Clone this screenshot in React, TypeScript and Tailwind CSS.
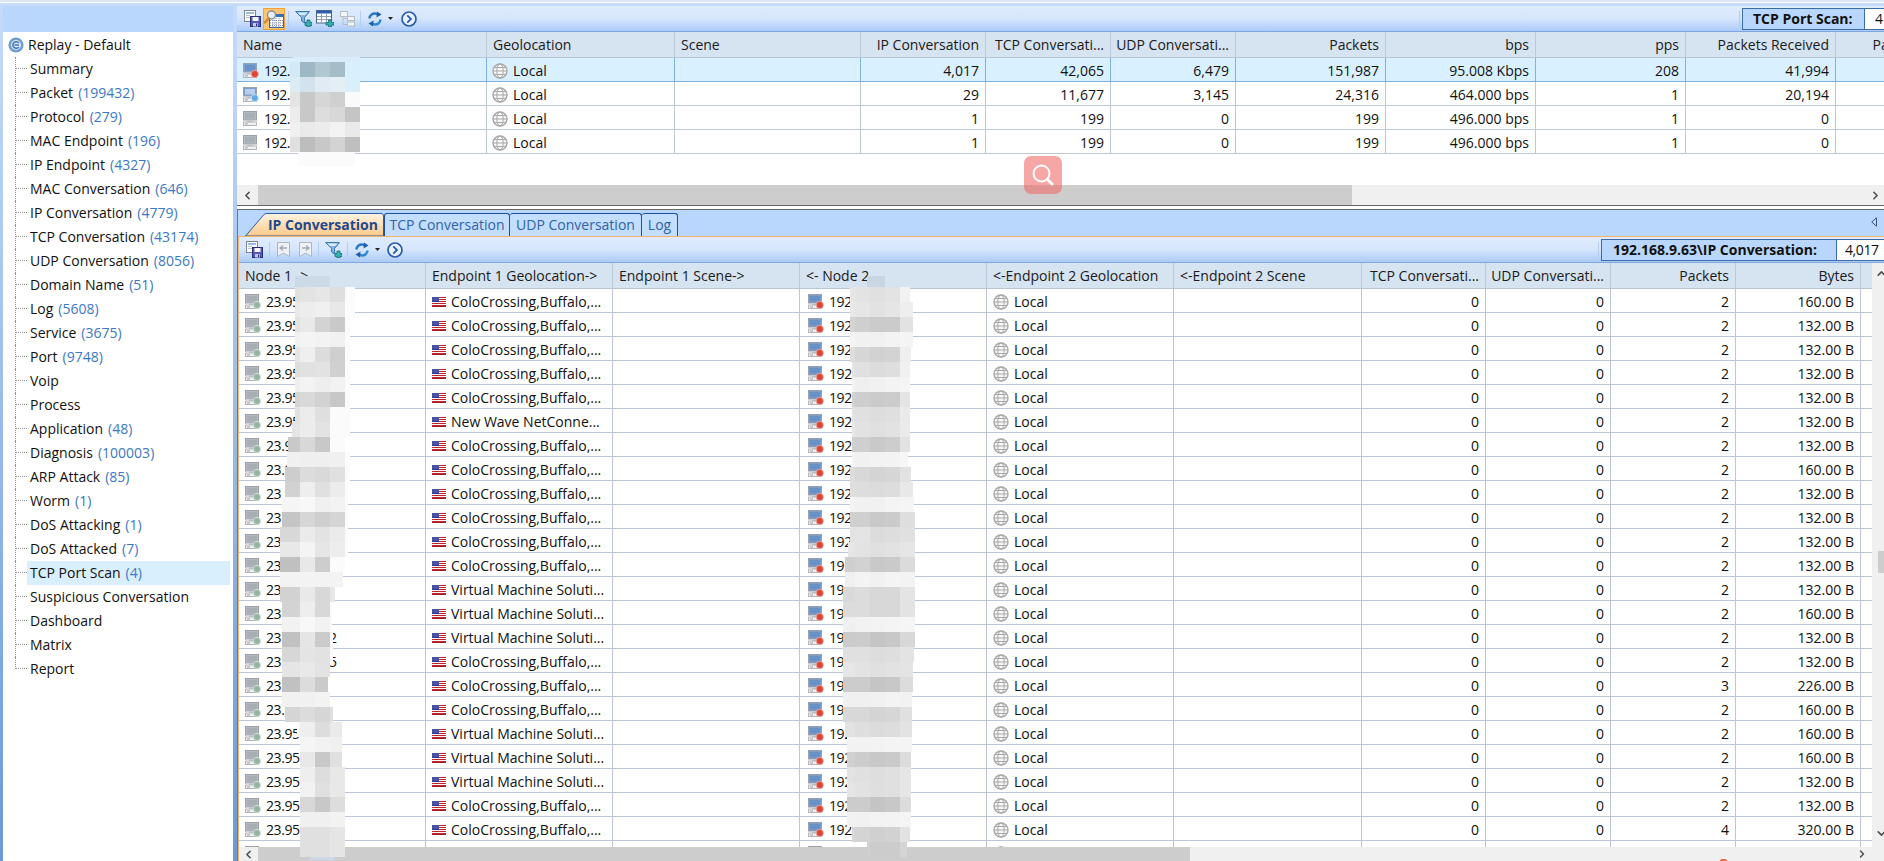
import { ChevronLeft, ChevronRight, ChevronUp, ChevronDown } from "lucide-react";

function SaveIcon() {
  return (
    <svg width="17" height="17" viewBox="0 0 17 17" className="shrink-0">
      <rect x="0.5" y="0.5" width="11" height="11" fill="#fff" stroke="#7d858e" />
      <rect x="2" y="2" width="8" height="2" fill="#9cbbe2" />
      <rect x="2" y="5" width="4" height="1" fill="#b5c4d8" />
      <rect x="2" y="7" width="4" height="1" fill="#b5c4d8" />
      <rect x="6.5" y="6.5" width="10" height="10" fill="#5256b8" stroke="#2a2e78" />
      <rect x="8.5" y="7" width="6" height="4" fill="#f4f6fb" />
      <rect x="9" y="13" width="5" height="3.5" fill="#c6cbe2" />
      <rect x="12" y="13.5" width="1.2" height="2.5" fill="#2a2e78" />
    </svg>
  );
}

function SearchGridIcon() {
  return (
    <svg width="20" height="18" viewBox="0 0 20 18" className="shrink-0">
      <rect x="5.5" y="4.5" width="14" height="13" fill="#fff" stroke="#3a6aa8" />
      <rect x="6" y="5" width="13" height="2" fill="#3a72bc" />
      <path d="M9 8v9M12 8v9M15 8v9M6 10.5h13M6 13h13M6 15.5h13" stroke="#7c8ea6" strokeWidth="1" strokeDasharray="1 1" />
      <circle cx="7.5" cy="5" r="4" fill="#e4f0fb" stroke="#8a8f98" strokeWidth="1.4" />
      <path d="M4.5 8.5L1 12.5" stroke="#c88a2c" strokeWidth="2.4" strokeLinecap="round" />
    </svg>
  );
}

function FilterPlusIcon() {
  return (
    <svg width="17" height="17" viewBox="0 0 17 17" className="shrink-0">
      <path d="M0.5 1.5H14.5L9.6 7.4V13L6.6 11V7.4Z" fill="#7fb4e4" stroke="#3a78b4" />
      <path d="M2.5 2.5H12.5L10 5H5Z" fill="#dcecfa" />
      <path d="M10 12.5h2V10h3v2.5H17v3h-2V17h-3v-1.5H10Z" fill="#34b2ac" stroke="#14687a" strokeWidth="0.8" />
    </svg>
  );
}

function TablePlusIcon() {
  return (
    <svg width="18" height="17" viewBox="0 0 18 17" className="shrink-0">
      <rect x="0.5" y="0.5" width="15" height="12.5" fill="#fff" stroke="#4a6488" />
      <rect x="1" y="1" width="14" height="2.5" fill="#2a5cb0" />
      <path d="M1 6.5h14M1 9.5h14M5.5 3.5v9M10.5 3.5v9" stroke="#8ea0b6" strokeWidth="1" />
      <path d="M10 12.5h2.5V10h3v2.5H18v2.5h-2.5V17h-3v-2H10Z" fill="#34b2ac" stroke="#14687a" strokeWidth="0.8" />
    </svg>
  );
}

function TreeIcon() {
  return (
    <svg width="15" height="16" viewBox="0 0 15 16" className="shrink-0">
      <g fill="#f2f5f8" stroke="#b6bcc4">
        <rect x="0.5" y="0.5" width="7" height="5" />
        <rect x="7.5" y="5.5" width="7" height="4" />
        <rect x="7.5" y="11" width="7" height="4" />
      </g>
      <path d="M3 6v7.5h4M3 7.5h4" fill="none" stroke="#b6bcc4" />
    </svg>
  );
}

function RefreshIcon() {
  return (
    <svg width="14" height="16" viewBox="0 0 14 16" className="shrink-0">
      <path d="M1.5 7.5C1.8 4 4.6 2 8 2.6L10.5 3.6" fill="none" stroke="#2b78c8" strokeWidth="2.4" />
      <path d="M9 0.5L13.5 3.6L8.5 6.5Z" fill="#1c5fa8" />
      <path d="M12.5 8.5C12.2 12 9.4 14 6 13.4L3.5 12.4" fill="none" stroke="#2b88d0" strokeWidth="2.4" />
      <path d="M5 15.5L0.5 12.4L5.5 9.5Z" fill="#1c5fa8" />
    </svg>
  );
}

function CircleNextIcon() {
  return (
    <svg width="16" height="16" viewBox="0 0 16 16" className="shrink-0">
      <circle cx="8" cy="8" r="7" fill="#e8f1fd" stroke="#2a5ca8" strokeWidth="1.7" />
      <path d="M6.3 4.3L10 8L6.3 11.7" fill="none" stroke="#2a5ca8" strokeWidth="1.8" />
    </svg>
  );
}

function BookmarkIcon({ dir }: { dir: "left" | "right" }) {
  return (
    <svg width="13" height="15" viewBox="0 0 13 15" className="shrink-0">
      <path d="M0.5 0.5H12.5V14.5L6.5 11L0.5 14.5Z" fill="#eef1f5" stroke="#aeb5bd" />
      <path d={dir === "left" ? "M3 6H10M6 3.5L3 6L6 8.5" : "M3 6H10M7 3.5L10 6L7 8.5"} fill="none" stroke="#a3a9b2" strokeWidth="1.3" />
    </svg>
  );
}

function DropArrow() {
  return (
    <svg width="5" height="3" viewBox="0 0 5 3" className="shrink-0">
      <path d="M0 0H5L2.5 3Z" fill="#222" />
    </svg>
  );
}

function ToolSep() {
  return <div className="w-[1px] h-[15px] bg-[#f4f8ff] border-l border-[#b5cdec] shrink-0" />;
}

function HostIcon({ badge }: { badge: "red" | "blue" | "none" | "green" }) {
  const server = badge === "none" || badge === "green";
  return (
    <svg width="16" height="15" viewBox="0 0 16 15" className="shrink-0">
      <rect x="0.5" y="0.5" width="13" height="8.5" fill={server ? "#b4bbc0" : "#7b9dcc"} stroke={server ? "#9ca4aa" : "#98a2ac"} />
      <rect x="2" y="2" width="10" height="5.5" fill={server ? "#a7afb5" : badge === "blue" ? "#b7cfec" : "#6a90c8"} />
      <rect x="4" y="9.5" width="6" height="1.5" fill="#c0c5c9" />
      <rect x="0.5" y="11" width="13" height="3.5" fill="#f0f1f2" stroke="#b2b6ba" />
      <rect x="2" y="12.4" width="3" height="1" fill="#9aa0a6" />
      {badge === "red" && <circle cx="11.8" cy="11" r="3.6" fill="#dc4436" stroke="#f3b0a6" strokeWidth="0.8" />}
      {badge === "blue" && <circle cx="11.8" cy="11" r="3.6" fill="#63ade4" stroke="#d4e8f8" strokeWidth="0.8" />}
      {badge === "green" && <circle cx="12" cy="11" r="3.6" fill="#94b6a0" stroke="#dbe3dc" strokeWidth="0.8" />}
    </svg>
  );
}

function GlobeIcon() {
  return (
    <svg width="16" height="16" viewBox="0 0 16 16" fill="none" stroke="#a8a8a8" strokeWidth="1" className="shrink-0">
      <circle cx="8" cy="8" r="7" fill="#f7f7f7" strokeWidth="1.4" />
      <ellipse cx="8" cy="8" rx="3.2" ry="7" />
      <path d="M1 8H15M2 4.5H14M2 11.5H14" />
    </svg>
  );
}

function UsFlag() {
  return (
    <svg width="14" height="10" viewBox="0 0 14 10" className="shrink-0">
      <rect width="14" height="10" fill="#fff" />
      <path d="M0 0.5H14M0 2.5H14M0 4.5H14M0 6.5H14M0 8.5H14" stroke="#c8202c" strokeWidth="1" />
      <path d="M0 9.5H14" stroke="#a02028" strokeWidth="1" />
      <rect width="7" height="5" fill="#2b3a90" />
      <path d="M0.5 1H7M0.5 3H7" stroke="#b8c0e8" strokeWidth="0.8" strokeDasharray="1 1" />
    </svg>
  );
}

function ReplayIcon() {
  return (
    <svg width="16" height="16" viewBox="0 0 16 16" className="shrink-0">
      <circle cx="8" cy="8" r="7.6" fill="#6e9fd0" />
      <circle cx="8" cy="8" r="5" fill="#dbe8f5" />
      <path d="M10.8 6.2A3.2 3.2 0 1 0 10.8 9.8" fill="none" stroke="#3f78b4" strokeWidth="1.5" />
      <path d="M6.5 8H11" stroke="#3f78b4" strokeWidth="1.5" />
    </svg>
  );
}

const treeItems: [string, string?][] = [
  ["Summary"],
  ["Packet", "(199432)"],
  ["Protocol", "(279)"],
  ["MAC Endpoint", "(196)"],
  ["IP Endpoint", "(4327)"],
  ["MAC Conversation", "(646)"],
  ["IP Conversation", "(4779)"],
  ["TCP Conversation", "(43174)"],
  ["UDP Conversation", "(8056)"],
  ["Domain Name", "(51)"],
  ["Log", "(5608)"],
  ["Service", "(3675)"],
  ["Port", "(9748)"],
  ["Voip"],
  ["Process"],
  ["Application", "(48)"],
  ["Diagnosis", "(100003)"],
  ["ARP Attack", "(85)"],
  ["Worm", "(1)"],
  ["DoS Attacking", "(1)"],
  ["DoS Attacked", "(7)"],
  ["TCP Port Scan", "(4)"],
  ["Suspicious Conversation"],
  ["Dashboard"],
  ["Matrix"],
  ["Report"],
];

function Sidebar() {
  return (
    <aside className="w-[230px] shrink-0 flex flex-col bg-white">
      <div className="h-[26px] bg-[#b9d7fd]" />
      <div className="h-[25px] flex items-center pl-[5px] gap-[4px] text-[#111]">
        <ReplayIcon />
        <span>Replay - Default</span>
      </div>
      {treeItems.map(([label, count], i) => (
        <div key={label} className="h-[24px] flex pl-[12px]">
          <div className={`w-0 border-l border-dotted border-[#8f8f8f] ${i === treeItems.length - 1 ? "h-[12px]" : "h-[24px]"}`} />
          <div className="w-[11px] h-[12px] border-b border-dotted border-[#8f8f8f] shrink-0" />
          <div className={`flex-1 flex items-center pl-[3px] mr-[3px] ${label === "TCP Port Scan" ? "bg-[#d9effd]" : ""}`}>
            <span className="text-[#111]">{label}</span>
            {count && <span className="ml-[5px] text-[#3b78c6]">{count}</span>}
          </div>
        </div>
      ))}
    </aside>
  );
}

const topCols = ["w-[250px]", "w-[188px]", "w-[186px]", "w-[125px]", "w-[125px]", "w-[125px]", "w-[150px]", "w-[150px]", "w-[150px]", "w-[150px]", "w-[126px]"];
const topHead = ["Name", "Geolocation", "Scene", "IP Conversation", "TCP Conversati...", "UDP Conversati...", "Packets", "bps", "pps", "Packets Received", "Packets Sent"];
const topRows: { ip: string; badge: "red" | "blue" | "none"; vals: string[] }[] = [
  { ip: "192.1", badge: "red", vals: ["4,017", "42,065", "6,479", "151,987", "95.008 Kbps", "208", "41,994", ""] },
  { ip: "192.", badge: "blue", vals: ["29", "11,677", "3,145", "24,316", "464.000 bps", "1", "20,194", ""] },
  { ip: "192.", badge: "none", vals: ["1", "199", "0", "199", "496.000 bps", "1", "0", ""] },
  { ip: "192.", badge: "none", vals: ["1", "199", "0", "199", "496.000 bps", "1", "0", ""] },
];

const lowCols = ["w-[187px]", "w-[187px]", "w-[187px]", "w-[187px]", "w-[187px]", "w-[188px]", "w-[124px]", "w-[125px]", "w-[125px]", "w-[125px]"];
const lowHead = ["Node 1 ->", "Endpoint 1 Geolocation->", "Endpoint 1 Scene->", "<- Node 2", "<-Endpoint 2 Geolocation", "<-Endpoint 2 Scene", "TCP Conversati...", "UDP Conversati...", "Packets", "Bytes"];

const colo = "ColoCrossing,Buffalo,...";
const vm = "Virtual Machine Soluti...";
const lowRows: [string, string, string][] = [
  [colo, "2", "160.00 B"],
  [colo, "2", "132.00 B"],
  [colo, "2", "132.00 B"],
  [colo, "2", "132.00 B"],
  [colo, "2", "132.00 B"],
  ["New Wave NetConne...", "2", "132.00 B"],
  [colo, "2", "132.00 B"],
  [colo, "2", "160.00 B"],
  [colo, "2", "132.00 B"],
  [colo, "2", "132.00 B"],
  [colo, "2", "132.00 B"],
  [colo, "2", "132.00 B"],
  [vm, "2", "132.00 B"],
  [vm, "2", "160.00 B"],
  [vm, "2", "132.00 B"],
  [colo, "2", "132.00 B"],
  [colo, "3", "226.00 B"],
  [colo, "2", "160.00 B"],
  [vm, "2", "160.00 B"],
  [vm, "2", "160.00 B"],
  [vm, "2", "132.00 B"],
  [colo, "2", "132.00 B"],
  [colo, "4", "320.00 B"],
];

function HeadRow({ cols, labels, leftCount }: { cols: string[]; labels: string[]; leftCount: number }) {
  return (
    <div className="h-[26px] flex bg-[#d6e3f1] border-b border-[#b9c6d5] text-[#1a1a1a] shrink-0">
      {labels.map((h, i) => (
        <div key={h} className={`${cols[i]} shrink-0 flex items-center px-[6px] pt-[1px] border-r border-[#bcc8d6] whitespace-nowrap overflow-hidden ${i < leftCount ? "justify-start" : "justify-end"}`}>
          {h}
        </div>
      ))}
    </div>
  );
}

function TopTable() {
  return (
    <div className="bg-white overflow-hidden">
      <HeadRow cols={topCols} labels={topHead} leftCount={3} />
      {topRows.map((r, ri) => {
        const sel = ri === 0;
        const cell = `shrink-0 flex items-center pt-[2px] border-r ${sel ? "border-[#7fb2e0]" : "border-[#c0c8d6]"}`;
        return (
          <div key={ri} className={`h-[24px] flex border-b text-[#111] ${sel ? "bg-[#d8f0ff] border-[#7fb2e0]" : "border-[#c0c8d6]"}`}>
            <div className={`${cell} ${topCols[0]} pl-[6px] gap-[5px]`}>
              <HostIcon badge={r.badge} />
              <span className="tracking-[-0.4px]">{r.ip}</span>
            </div>
            <div className={`${cell} ${topCols[1]} pl-[5px] gap-[5px]`}>
              <GlobeIcon />
              <span>Local</span>
            </div>
            <div className={`${cell} ${topCols[2]}`} />
            {r.vals.map((v, i) => (
              <div key={i} className={`${cell} ${topCols[i + 3]} justify-end pr-[6px]`}>{v}</div>
            ))}
          </div>
        );
      })}
    </div>
  );
}

function HScroll({ thumb, arrow }: { thumb: string; arrow: string }) {
  return (
    <div className="flex bg-[#f0f0f0] h-full">
      <div className={`${arrow} shrink-0 flex items-center justify-center text-[#505050]`}>
        <ChevronLeft size={13} strokeWidth={3} />
      </div>
      <div className={`${thumb} shrink-0 bg-[#cdcdcd]`} />
      <div className="flex-1" />
    </div>
  );
}

function LowTable() {
  return (
    <div className="flex-1 flex min-h-0">
      <div className="flex-1 min-w-0 flex flex-col bg-white overflow-hidden">
        <div className="flex shrink-0">
          <HeadRow cols={lowCols} labels={lowHead} leftCount={6} />
          <div className="flex-1 h-[26px] bg-[#d6e3f1] border-b border-[#b9c6d5]" />
        </div>
        <div className="flex-1 min-h-0 overflow-hidden">
          {[...lowRows, null].map((row, i) => (
            <div key={i} className="h-[24px] flex border-b border-[#bcc6d8] text-[#111]">
              <div className={`${lowCols[0]} shrink-0 flex items-center pt-[2px] pl-[6px] gap-[5px] border-r border-[#bcc6d8] whitespace-nowrap overflow-hidden`}>
                <HostIcon badge="green" />
                {row && <span className="tracking-[-0.4px]">{i === 14 ? "23.95.179.2" : i === 15 ? "23.95.179.5" : "23.95.1"}</span>}
              </div>
              <div className={`${lowCols[1]} shrink-0 flex items-center pt-[2px] pl-[6px] gap-[5px] border-r border-[#bcc6d8] whitespace-nowrap`}>
                {row && <UsFlag />}
                {row && <span>{row[0]}</span>}
              </div>
              <div className={`${lowCols[2]} shrink-0 border-r border-[#bcc6d8]`} />
              <div className={`${lowCols[3]} shrink-0 flex items-center pt-[2px] pl-[8px] gap-[5px] border-r border-[#bcc6d8]`}>
                <HostIcon badge="red" />
                {row && <span className="tracking-[-0.4px]">{i === 22 ? "192.16" : "192.1"}</span>}
              </div>
              <div className={`${lowCols[4]} shrink-0 flex items-center pt-[2px] pl-[6px] gap-[5px] border-r border-[#bcc6d8]`}>
                <GlobeIcon />
                {row && <span>Local</span>}
              </div>
              <div className={`${lowCols[5]} shrink-0 border-r border-[#bcc6d8]`} />
              {(row ? ["0", "0", row[1], row[2]] : ["", "", "", ""]).map((v, k) => (
                <div key={k} className={`${lowCols[k + 6]} shrink-0 flex items-center justify-end pt-[2px] pr-[6px] border-r border-[#bcc6d8]`}>{v}</div>
              ))}
            </div>
          ))}
        </div>
      </div>
      <div className="w-[12px] shrink-0 bg-[#f0f0f0] flex flex-col text-[#505050] relative overflow-hidden">
        <div className="h-[20px] pl-[3px] pt-[4px]"><ChevronUp size={13} strokeWidth={3} /></div>
        <div className="ml-[6px] mt-[268px] h-[22px] bg-[#cdcdcd]" />
        <div className="flex-1" />
        <div className="h-[20px] pl-[3px]"><ChevronDown size={13} strokeWidth={3} /></div>
      </div>
    </div>
  );
}

function Toolbar({ children }: { children: React.ReactNode }) {
  return <div className="h-[26px] shrink-0 flex items-center bg-linear-to-b from-[#e0ecfe] via-[#d6e6fd] to-[#abcbf8] border-b border-[#7fa8e0] overflow-hidden">{children}</div>;
}

// blurred redaction patches, one row per line: left right then shades on a 15px grid
const topBlob = [
  "h5 23 90 #daecf9 #daecf9 #daecf9 #daecf9 #daecf9",
  "20 90 #d3e9f6 #9fb8c6 #b1c7d2 #a6bdc9 #d8effe",
  "20 90 #dcecf6 #d3e3ed #e0ebf3 #e4eef5 #d9effc",
  "20 90 e4 c8 d6 d0 fa",
  "20 90 ec c8 dd d8 c5",
  "20 90 f0 ea ec f3 ea",
  "20 90 e0 bd c8 d3 bf",
  "h14 28 85 fb fb fb fb fb",
];

const leftBlob = [
  "h11 25 60 #ccd9e6 #ccd9e6 #ccd9e6 #ccd9e6 #ccd9e6",
  "25 85 e0 e3 e6 de fb",
  "25 85 e8 ed f0 e8 fb",
  "25 80 e2 e9 d3 c9 fb",
  "25 80 f2 f4 f3 f1 fb",
  "25 80 e5 ef dc cf fb",
  "25 80 dd e1 e2 d0 fb",
  "25 80 ee f3 ee f2 fb",
  "25 80 d5 d9 d2 c7 fb",
  "25 80 e2 ec df fb fb",
  "22 80 e5 ec e3 fb fb",
  "18 75 c9 d8 c8 fb fb",
  "17 80 f0 ef ef f0 fb",
  "15 80 cd dc d9 e0 fb",
  "15 78 d2 ee e0 ec fb",
  "12 78 f5 f8 f0 f3 fb",
  "12 78 c5 d6 cf d5 fb",
  "10 78 d8 eb e3 eb fb",
  "10 78 e8 f4 e6 ed fb",
  "10 75 c0 e8 cd fb fb",
  "10 73 f3 f3 f3 f3 fb",
  "10 65 d2 e9 d8 e6 fb",
  "12 62 d3 ee d8 fa fb",
  "12 62 f2 f8 f2 fa fb",
  "12 63 c1 e5 cb fa fb",
  "12 63 d7 e4 e2 fa fb",
  "12 60 e5 e9 e3 fa fb",
  "12 58 c1 dc ca fa fb",
  "12 60 f1 f1 f3 fa fb",
  "15 63 d5 dc d6 e0 fb",
  "27 72 fa ee dd ea fb",
  "30 72 fa f5 f2 f0 fb",
  "30 72 fa e8 c8 e0 fb",
  "30 75 fa ee dd e8 fb",
  "30 75 fa f2 e0 e8 fb",
  "30 75 fa d8 c8 dd fb",
  "30 75 fa f0 f0 f2 fb",
  "30 75 fa e0 e0 e5 fb",
  "30 75 fa e0 e0 e5 fb",
  "h3 40 65 #cdd8e4 #cdd8e4 #cdd8e4 #cdd8e4 #cdd8e4",
];

const rightBlob = [
  "h11 42 60 #c8d6e4 #c8d6e4 #c8d6e4 #c8d6e4 #c8d6e4",
  "25 85 e6 e3 e0 e3 f2",
  "25 88 e8 e6 e2 e5 ee",
  "25 88 d4 cf cb cb e2",
  "25 88 f4 f1 f1 f3 f4",
  "25 86 dd d6 d2 d3 ef",
  "27 85 e4 e0 dc de f0",
  "27 85 f2 ef f1 f3 f4",
  "27 85 d2 ce cb cc e4",
  "27 85 e2 e0 dd df ea",
  "27 85 e8 e2 e0 e2 eb",
  "27 85 d0 cf c9 cd e2",
  "27 83 f4 f1 f3 f3 f6",
  "25 86 dc d8 d4 d6 e2",
  "25 88 df dd dc dd e8",
  "25 89 f3 f1 f1 f4 f5",
  "25 90 d0 cf c9 cb de",
  "25 90 e3 e4 dc dd e0",
  "23 90 e6 e3 e0 e2 e6",
  "20 90 cf d2 c9 ca db",
  "20 90 ef f3 f1 f4 f3",
  "18 90 d9 dc d8 d8 e4",
  "18 90 dc dc d8 d8 e3",
  "18 90 f0 f2 f3 f4 f5",
  "18 90 cb cc c5 c8 d8",
  "18 89 e0 e0 dd de e3",
  "18 88 e6 e3 e0 e2 e4",
  "18 88 cc cc c5 c8 dc",
  "18 87 f0 f0 f1 f3 f2",
  "18 87 d8 d8 d4 d6 e0",
  "20 87 e2 de dc dd e3",
  "22 87 f2 f2 f3 f4 f4",
  "22 86 d0 cc c8 ca dc",
  "22 86 e2 e0 de e0 e6",
  "22 86 e5 e2 df e0 e6",
  "22 86 cc cc c4 c8 dc",
  "22 86 f2 f1 f3 f3 f4",
  "27 85 d8 d4 d0 d2 e2",
  "42 82 d0 d0 cc cc d4",
];

function shade(s: string) {
  return s.length === 2 ? `#${s}${s}${s}` : s;
}

function Blob({ rows, className }: { rows: string[]; className: string }) {
  return (
    <div className={`absolute ${className}`}>
      {rows.map((line, i) => {
        const parts = line.split(" ");
        const h = parts[0].startsWith("h") ? Number(parts.shift()!.slice(1)) : 15;
        const l = Number(parts[0]);
        const r = Number(parts[1]);
        const cells = parts.slice(2);
        return (
          <div key={i} className="overflow-hidden" style={{ marginLeft: l, width: r - l, height: h }}>
            <div className="flex h-full" style={{ marginLeft: -l }}>
              {[cells[0], ...cells, "fb"].map((c, k) => (
                <div key={k} className="w-[15px] h-full shrink-0" style={{ background: shade(c) }} />
              ))}
            </div>
          </div>
        );
      })}
    </div>
  );
}

export default function App() {
  return (
    <div className="relative w-[1884px] h-[861px] overflow-hidden text-[14px] leading-none font-['Open_Sans','Noto_Sans',sans-serif] bg-linear-to-b from-[#c6dcfb] to-[#6a99d9]">
      <div className="h-[2px] bg-[#dbe6f7]" />
      <div className="h-[1px] bg-white" />
      <div className="h-[3px]" />
      <div className="flex h-[855px] pl-[3px]">
        <Sidebar />
        <div className="w-[4px] shrink-0" />
        <main className="flex-1 min-w-0 flex flex-col overflow-hidden">
          <Toolbar>
            <div className="pl-[7px]"><SaveIcon /></div>
            <div className="ml-[2px] w-[22px] h-[22px] flex items-center justify-center bg-[#fcc470] border border-[#f0a33a]">
              <SearchGridIcon />
            </div>
            <div className="ml-[3px]"><ToolSep /></div>
            <div className="ml-[6px]"><FilterPlusIcon /></div>
            <div className="ml-[4px]"><TablePlusIcon /></div>
            <div className="ml-[6px]"><TreeIcon /></div>
            <div className="ml-[5px]"><ToolSep /></div>
            <div className="ml-[7px]"><RefreshIcon /></div>
            <div className="ml-[6px]"><DropArrow /></div>
            <div className="ml-[8px]"><CircleNextIcon /></div>
            <div className="flex-1" />
            <ToolSep />
            <div className="ml-[2px] w-[142px] h-[22px] flex border border-r-0 border-[#3a6ca8] bg-white">
              <div className="w-[122px] flex items-center pl-[10px] bg-[#b9d6fc] border-r border-[#3a6ca8] font-bold text-[#111]">TCP Port Scan:</div>
              <div className="flex-1 flex items-center pl-[10px] text-[#111]">4</div>
            </div>
          </Toolbar>
          <TopTable />
          <div className="h-[31px] bg-white shrink-0" />
          <div className="h-[20px] shrink-0">
            <HScroll thumb="w-[1094px]" arrow="w-[21px]" />
          </div>
          <div className="h-[5px] shrink-0 bg-white border-t border-b border-[#666]" />
          <div className="flex-1 min-h-0 flex flex-col border-l border-[#4f7fc0]">
            <div className="h-[26px] shrink-0 flex items-end pl-[7px] bg-[#b9d7fc] relative">
              <div className="relative w-[139px] h-[23px] flex items-center justify-end pr-[6px] font-bold text-[#1d4a8e]">
                <svg width="139" height="23" viewBox="0 0 139 23" className="absolute inset-0">
                  <defs>
                    <linearGradient id="activeTab" x1="0" y1="0" x2="0" y2="1">
                      <stop offset="0" stopColor="#fff4e2" />
                      <stop offset="1" stopColor="#fbc888" />
                    </linearGradient>
                  </defs>
                  <path d="M0.5 23L19 1.5Q20 0.5 22 0.5H136Q138.5 0.5 138.5 3V23Z" fill="url(#activeTab)" stroke="#2a5ca8" />
                </svg>
                <span className="relative">IP Conversation</span>
              </div>
              <div className="w-[126px] h-[23px] flex items-center justify-center rounded-t-[3px] border border-b-0 border-[#1f50a0] text-[#2f63a8] bg-[#c4defd]">TCP Conversation</div>
              <div className="w-[132px] h-[23px] flex items-center justify-center rounded-t-[3px] border border-b-0 border-l-0 border-[#1f50a0] text-[#2f63a8] bg-[#c4defd]">UDP Conversation</div>
              <div className="w-[36px] h-[23px] flex items-center justify-center rounded-t-[3px] border border-b-0 border-l-0 border-[#1f50a0] text-[#2f63a8] bg-[#c4defd]">Log</div>
              <svg width="6" height="10" viewBox="0 0 6 10" className="absolute right-[7px] top-[7px]">
                <path d="M5.5 0.8V9.2L0.7 5Z" fill="none" stroke="#33558a" strokeWidth="1" />
              </svg>
            </div>
            <div className="h-[1px] shrink-0 bg-[#f3b26a]" />
            <div className="flex-1 min-h-0 flex flex-col border-l border-[#f3b26a]">
              <Toolbar>
                <div className="pl-[7px]"><SaveIcon /></div>
                <div className="ml-[6px]"><ToolSep /></div>
                <div className="ml-[7px]"><BookmarkIcon dir="left" /></div>
                <div className="ml-[9px]"><BookmarkIcon dir="right" /></div>
                <div className="ml-[6px]"><ToolSep /></div>
                <div className="ml-[6px]"><FilterPlusIcon /></div>
                <div className="ml-[5px]"><ToolSep /></div>
                <div className="ml-[7px]"><RefreshIcon /></div>
                <div className="ml-[6px]"><DropArrow /></div>
                <div className="ml-[7px]"><CircleNextIcon /></div>
                <div className="flex-1" />
                <ToolSep />
                <div className="ml-[2px] w-[283px] h-[22px] flex border border-r-0 border-[#3a6ca8] bg-white">
                  <div className="w-[235px] flex items-center pl-[11px] bg-[#b9d6fc] border-r border-[#3a6ca8] font-bold text-[#111]">192.168.9.63\IP Conversation:</div>
                  <div className="flex-1 flex items-center pl-[8px] tracking-[-0.4px] text-[#111]">4,017</div>
                </div>
              </Toolbar>
              <LowTable />
              <div className="h-[14px] shrink-0">
                <HScroll thumb="w-[932px]" arrow="w-[19px]" />
              </div>
            </div>
          </div>
        </main>
      </div>
      <div className="absolute right-[16px] bottom-[1px] text-[#505050]"><ChevronRight size={12} strokeWidth={3} /></div>
      <div className="absolute right-[2px] top-[189px] text-[#505050]"><ChevronRight size={13} strokeWidth={3} /></div>

      <Blob rows={topBlob} className="left-[270px] top-[57px]" />
      <Blob rows={leftBlob} className="left-[270px] top-[276px]" />
      <Blob rows={rightBlob} className="left-[825px] top-[276px]" />

      <div className="absolute left-[1024px] top-[156px] w-[38px] h-[38px] rounded-[7px] bg-[#f26a6a]/60 flex items-center justify-center">
        <svg width="24" height="24" viewBox="0 0 24 24" fill="none" stroke="#fff" strokeWidth="2">
          <circle cx="10.5" cy="10.5" r="8" />
          <path d="M16.5 16.5L21 21" strokeWidth="3" strokeLinecap="round" />
        </svg>
      </div>
      <div className="absolute left-[1720px] bottom-0 w-[7px] h-[2px] rounded-t-full bg-[#f26a3a]" />
    </div>
  );
}
